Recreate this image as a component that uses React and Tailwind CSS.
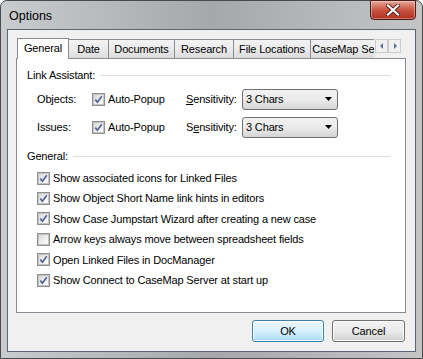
import React from 'react';

const tabs = [
  { label: 'Date', w: 'w-[40px]' },
  { label: 'Documents', w: 'w-[66px]' },
  { label: 'Research', w: 'w-[59px]' },
  { label: 'File Locations', w: 'w-[77px]' },
  { label: 'CaseMap Server', w: 'w-[84px]' },
];

const options = [
  { label: 'Show associated icons for Linked Files', on: true },
  { label: 'Show Object Short Name link hints in editors', on: true },
  { label: 'Show Case Jumpstart Wizard after creating a new case', on: true },
  { label: 'Arrow keys always move between spreadsheet fields', on: false },
  { label: 'Open Linked Files in DocManager', on: true },
  { label: 'Show Connect to CaseMap Server at start up', on: true },
];

function Check({ on }) {
  return (
    <span className="flex h-[13px] w-[13px] shrink-0 items-center justify-center border border-[#8e8f8f] bg-white">
      <span className="flex h-[11px] w-[11px] items-center justify-center border border-[#c4c4c4] bg-gradient-to-br from-[#d6d6d6] via-[#eeeeee] to-[#fdfdfd]">
        {on && (
          <svg width="9" height="9" viewBox="0 0 9 9">
            <path d="M1.3 4.6 L3.4 7.2 L7.8 1.2" fill="none" stroke="#4f6396" strokeWidth="1.7" />
          </svg>
        )}
      </span>
    </span>
  );
}

function GroupHead({ label }) {
  return (
    <div className="flex h-[14px] items-center pr-[15px]">
      <span>{label}</span>
      <span className="ml-[5px] h-px flex-1 bg-[#d5dfe5]" />
    </div>
  );
}

function Select() {
  return (
    <div className="flex h-[21px] w-[96px] items-center justify-between rounded-[3px] border border-[#707070] bg-gradient-to-b from-[#f2f2f2] via-[#ebebeb] to-[#d5d5d5] pl-[3px] pr-[4px]">
      <span>3 Chars</span>
      <svg width="8" height="5" viewBox="0 0 8 5">
        <path d="M0 0 H7 L3.5 4 Z" fill="#000" />
      </svg>
    </div>
  );
}

function LinkRow({ label, under }) {
  return (
    <div className="ml-[10px] flex h-[21px] items-center">
      <span className="w-[55px]">{label}</span>
      <span className="flex w-[94px] items-center gap-[3px]">
        <Check on />
        <span>Auto-Popup</span>
      </span>
      <span className="w-[56px]">
        {under === 0 ? (
          <>
            <span className="underline">S</span>ensitivity:
          </>
        ) : (
          <>
            S<span className="underline">e</span>nsitivity:
          </>
        )}
      </span>
      <Select />
    </div>
  );
}

export default function App() {
  return (
    <div className="h-[359px] w-[423px] bg-white font-['Segoe_UI','Liberation_Sans',sans-serif] text-[11px] tracking-[-0.15px] text-black">
      <div className="flex h-full w-full flex-col rounded-t-[7px] border border-[#4a4a4a] bg-gradient-to-r from-[#c9ccce] via-[#a5a7aa] to-[#c3c5c7] px-[6px] pb-[6px]">
        <div className="flex h-[28px] shrink-0 items-start justify-between">
          <span className="mt-[6px] pl-[2px] text-[12.5px] tracking-normal">Options</span>
          <div className="-mt-px flex h-[20px] w-[46px] items-center justify-center rounded-b-[4px] border border-[#4d1e17] bg-gradient-to-b from-[#e4a89a] via-[#c8533f] to-[#b0301e] shadow-[inset_0_0_0_1px_rgba(255,255,255,0.35)]">
            <svg width="14" height="12" viewBox="0 0 14 12">
              <path d="M2 1.5 L12 10.5 M12 1.5 L2 10.5" stroke="#5a1a10" strokeWidth="4" strokeLinecap="square" />
              <path d="M2 1.5 L12 10.5 M12 1.5 L2 10.5" stroke="#ffffff" strokeWidth="2.2" strokeLinecap="square" />
            </svg>
          </div>
        </div>

        <div className="flex flex-1 flex-col border border-[#5b6572] bg-[#f0f0f0]">
          <div className="mt-[8px] flex items-end">
            <div className="relative z-10 -mb-px ml-[9px] flex h-[21px] w-[357px] items-end overflow-hidden">
              <div className="flex h-[21px] w-[52px] shrink-0 items-center justify-center border-x border-t border-[#898c95] bg-white pb-[1px]">
                General
              </div>
              {tabs.map((t) => (
                <div
                  key={t.label}
                  className={`mb-px flex h-[19px] shrink-0 items-center justify-center whitespace-nowrap border-r border-t border-[#898c95] bg-gradient-to-b from-[#f3f3f3] via-[#ebebeb] to-[#dcdcdc] ${t.w}`}
                >
                  {t.label}
                </div>
              ))}
            </div>
            <div className="mb-[5px] ml-px flex">
              {['M6 2 L3 5 L6 8 Z', 'M4 2 L7 5 L4 8 Z'].map((d) => (
                <span key={d} className="flex h-[14px] w-[13px] items-center justify-center border border-[#c9cbd0] bg-[#f0f0f0]">
                  <svg width="10" height="10" viewBox="0 0 10 10">
                    <path d={d} fill="#5a6e9a" />
                  </svg>
                </span>
              ))}
            </div>
          </div>

          <div className="ml-[8px] flex h-[255px] w-[390px] flex-col border border-[#898c95] bg-white pl-[10px] pt-[9px]">
            <GroupHead label="Link Assistant:" />
            <div className="mt-[7px] flex flex-col gap-[7px]">
              <LinkRow label="Objects:" under={0} />
              <LinkRow label="Issues:" under={1} />
            </div>
            <div className="mt-[11px]">
              <GroupHead label="General:" />
            </div>
            <div className="ml-[10px] mt-[5px] flex flex-col">
              {options.map((o) => (
                <div key={o.label} className="flex h-[20.4px] items-center gap-[3px]">
                  <Check on={o.on} />
                  <span>{o.label}</span>
                </div>
              ))}
            </div>
          </div>

          <div className="mr-[10px] mt-[7px] flex justify-end gap-[8px]">
            <button className="flex h-[22px] w-[72px] items-center justify-center rounded-[3px] border border-[#3c7fb1] bg-gradient-to-b from-[#eaf6fd] via-[#d9f0fc] to-[#a7d9f5] shadow-[inset_0_0_0_1px_#ffffff]">
              OK
            </button>
            <button className="flex h-[22px] w-[73px] items-center justify-center rounded-[3px] border border-[#707070] bg-gradient-to-b from-[#f2f2f2] via-[#ebebeb] to-[#cfcfcf] shadow-[inset_0_0_0_1px_#fbfbfb]">
              Cancel
            </button>
          </div>
        </div>
      </div>
    </div>
  );
}
